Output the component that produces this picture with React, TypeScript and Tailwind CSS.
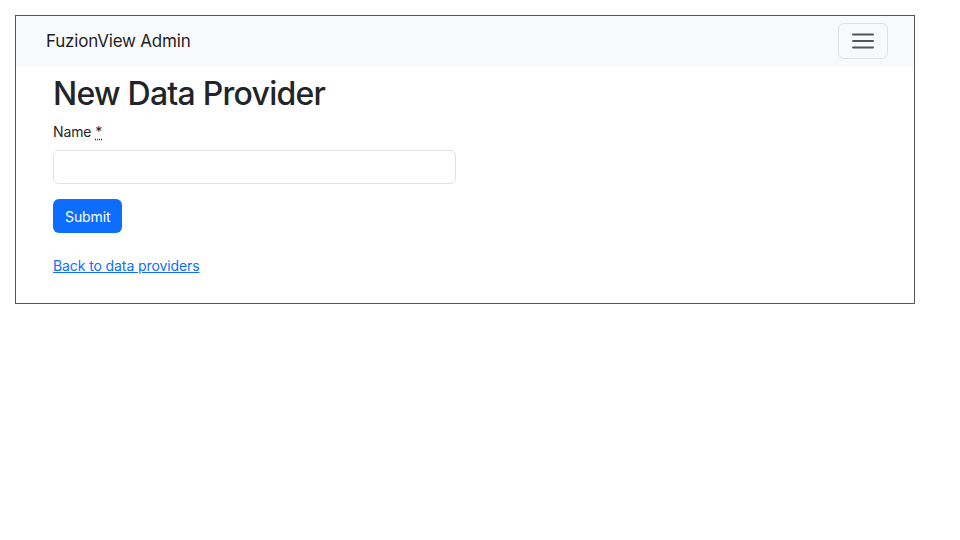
import React from 'react';

const ff = { fontFamily: 'Inter, "Noto Sans", sans-serif' };

export default function App() {
  return (
    <div className="min-h-[540px] bg-white pt-[15px] pl-[15px]" style={ff}>
      <div className="h-[289px] w-[900px] border border-[#555]">
        {/* Navbar */}
        <nav className="flex h-[51px] items-center justify-between bg-[#f8f9fa] pl-[30px] pr-[26px]">
          <a className="text-[17px] tracking-[-0.2px] text-[#000000e6]">FuzionView Admin</a>
          <button
            type="button"
            className="flex h-[36px] w-[50px] -translate-y-[1px] items-center justify-center rounded-[6px] border border-[#0000001a]"
          >
            <svg width="24" height="18" viewBox="0 0 24 18">
              <path d="M2 2.5h20M2 9h20M2 15.5h20" stroke="#555" strokeWidth="2" strokeLinecap="round" />
            </svg>
          </button>
        </nav>

        {/* Content */}
        <div className="pl-[37px] pt-[8px]">
          <h1 className="mb-[8px] text-[32px] font-medium leading-[1.2] tracking-[-0.75px] text-[#212529]">New Data Provider</h1>
          <form>
            <label className="mb-[8px] block text-[14px] tracking-[-0.1px] text-[#212529]">
              Name <abbr title="required" className="underline decoration-dotted">*</abbr>
            </label>
            <input
              type="text"
              className="mb-[15px] block h-[34px] w-[403px] rounded-[6px] border border-[#dee2e6] px-3 text-[14px] outline-none"
            />
            <button
              type="submit"
              className="h-[34px] rounded-[6px] bg-[#0d6efd] px-[12px] text-[14px] tracking-[-0.1px] text-white"
            >
              Submit
            </button>
          </form>
          <a href="#" className="mt-[22px] inline-block text-[14px] tracking-[-0.1px] text-[#0d6efd] underline">
            Back to data providers
          </a>
        </div>
      </div>
    </div>
  );
}
